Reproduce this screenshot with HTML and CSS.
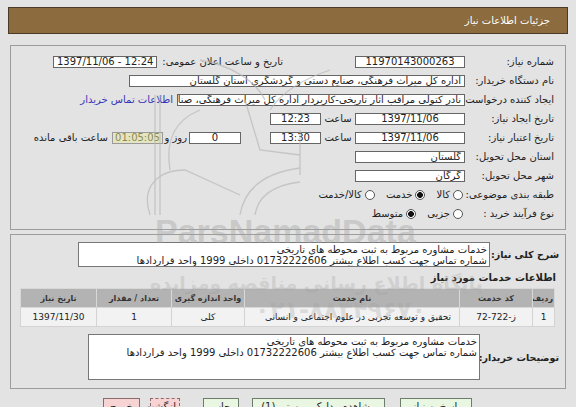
FILE: index.html
```html
<!DOCTYPE html>
<html lang="fa" dir="rtl">
<head>
<meta charset="utf-8">
<title>جزئیات اطلاعات نیاز</title>
<link rel="stylesheet" href="styles.css">
</head>
<body>
<div class="titlebar">جزئیات اطلاعات نیاز</div>

<div class="panel p1">
  <div class="row">
    <div class="lbl">شماره نیاز:</div>
    <div class="inp w110 c">11970143000263</div>
    <div class="lbl2">تاریخ و ساعت اعلان عمومی:</div>
    <div class="inp w104 c ltr">1397/11/06 - 12:24</div>
  </div>
  <div class="row">
    <div class="lbl">نام دستگاه خریدار:</div>
    <div class="inp w336">اداره کل میراث فرهنگی، صنایع دستی و گردشگری استان گلستان</div>
  </div>
  <div class="row">
    <div class="lbl">ایجاد کننده درخواست:</div>
    <div class="inp w288">نادر کتولی مراقب آثار تاریخی-کاربردار اداره کل میراث فرهنگی، صنایع دستی و گردشگری استان گلستان</div>
    <a class="link" href="#">اطلاعات تماس خریدار</a>
  </div>
  <div class="row">
    <div class="lbl">تاریخ ایجاد نیاز:</div>
    <div class="inp w110 c">1397/11/06</div>
    <div class="sa">ساعت</div>
    <div class="inp w51 c">12:23</div>
  </div>
  <div class="row">
    <div class="lbl">تاریخ اعتبار نیاز:</div>
    <div class="inp w110 c">1397/11/06</div>
    <div class="sa">ساعت</div>
    <div class="inp w51 c">13:30</div>
    <div class="inp w52 c ml">0</div>
    <div class="rooz">روز و</div>
    <div class="remain">01:05:05</div>
    <div class="rtxt">ساعت باقی مانده</div>
  </div>
  <div class="row">
    <div class="lbl">استان محل تحویل:</div>
    <div class="inp w110">گلستان</div>
  </div>
  <div class="row">
    <div class="lbl">شهر محل تحویل:</div>
    <div class="inp w110">گرگان</div>
  </div>
  <div class="row">
    <div class="lbl">طبقه بندی موضوعی:</div>
    <div class="opts">
      <span class="opt"><span class="radio"></span>کالا</span>
      <span class="opt"><span class="radio on"></span>خدمت</span>
      <span class="opt"><span class="radio"></span>کالا/خدمت</span>
    </div>
  </div>
  <div class="row">
    <div class="lbl">نوع فرآیند خرید :</div>
    <div class="opts">
      <span class="opt"><span class="radio"></span>جزیی</span>
      <span class="opt"><span class="radio on"></span>متوسط</span>
    </div>
  </div>
</div>

<div class="panel p2">
  <div class="drow">
    <div class="blbl w75">شرح کلی نیاز:</div>
    <div class="tarea t1">خدمات مشاوره مربوط به ثبت محوطه های تاریخی<br>شماره تماس جهت کسب اطلاع بیشتر 01732222606 داخلی 1999 واحد قراردادها</div>
  </div>
  <div class="sect">اطلاعات خدمات مورد نیاز</div>
  <table class="grid">
    <thead>
      <tr>
        <th class="c1">ردیف</th>
        <th class="c2">کد خدمت</th>
        <th class="c3">نام خدمت</th>
        <th class="c4">واحد اندازه گیری</th>
        <th class="c5">تعداد / مقدار</th>
        <th class="c6">تاریخ نیاز</th>
      </tr>
    </thead>
    <tbody>
      <tr>
        <td>1</td>
        <td>ز-722-72</td>
        <td class="name">تحقیق و توسعه تجربی در علوم اجتماعی و انسانی</td>
        <td>کلی</td>
        <td>1</td>
        <td>1397/11/30</td>
      </tr>
    </tbody>
  </table>
  <div class="drow d2">
    <div class="blbl w85">توضیحات خریدار:</div>
    <div class="tarea t2">خدمات مشاوره مربوط به ثبت محوطه های تاریخی<br>شماره تماس جهت کسب اطلاع بیشتر 01732222606 داخلی 1999 واحد قراردادها</div>
  </div>
</div>

<div class="buttons">
  <span class="btn green b1">پاسخ به نیاز</span>
  <span class="btn green b2">مشاهده مدارک پیوستی (1)</span>
  <span class="btn green b3">چاپ</span>
  <span class="btn pink dotted b4">بازگشت</span>
  <span class="btn pink b5">خروج</span>
</div>

<div class="wm" aria-hidden="true">
  <svg class="wm-logo" width="576" height="407" viewBox="0 0 576 407">
    <g fill="none" stroke="#b9b9b9" stroke-width="1.3">
      <path d="M150 215 C140 185 160 170 185 170 L240 195"/>
      <path d="M170 170 C165 140 175 120 200 110"/>
      <path d="M155 95 L155 215"/>
      <path d="M160 95 L160 215"/>
      <path d="M240 215 C245 185 270 172 300 168"/>
      <path d="M255 215 C258 195 275 185 300 182"/>
      <path d="M245 100 L260 150 L300 155"/>
      <path d="M200 60 C230 65 255 80 265 100"/>
      <path d="M330 70 C300 80 280 95 270 110"/>
      <path d="M300 130 L300 175"/>
    </g>
  </svg>
  <div class="wm-en">ParsNamadData</div>
  <div class="wm-fa">پایگاه اطلاع رسانی مناقصه ومزایده</div>
  <div class="wm-ph">۰۲۱-۸۸۳۴۹۶۷۰</div>
</div>
</body>
</html>
```

FILE: styles.css
```css
* { box-sizing: border-box; }
html, body { margin: 0; padding: 0; }
body {
  width: 576px;
  height: 407px;
  overflow: hidden;
  position: relative;
  background: #e3e3e3;
  font-family: "DejaVu Sans", sans-serif;
  font-size: 10px;
  color: #222;
  direction: rtl;
}
.titlebar {
  margin: 7px 8px 0;
  height: 27px;
  background: #8c6b3e;
  border: 1px solid #4a3b28;
  color: #fff;
  line-height: 25px;
  padding-right: 17px;
}
.panel {
  margin: 0 10px;
  border: 1px solid #9c9c9c;
}
.p1 { margin-top: 11px; padding: 6px 0; }
.row { display: flex; align-items: center; height: 19px; }
.lbl { flex: none; width: 100px; padding-right: 11px; white-space: nowrap; }
.inp {
  flex: none;
  height: 12px;
  background: #fff;
  border: 1px solid #666;
  line-height: 10px;
  padding: 0 3px;
  white-space: nowrap;
  overflow: hidden;
}
.c { text-align: center; }
.ltr { direction: ltr; }
.w110 { width: 110px; }
.w104 { width: 104px; }
.w336 { width: 336px; }
.w288 { width: 288px; }
.w51 { width: 51px; }
.w52 { width: 52px; }
.ml { margin-right: 29px; }
.lbl2 { flex: none; width: 126px; margin-right: 72px; white-space: nowrap; }
.link { color: #3535b8; text-decoration: none; margin-right: 4px; white-space: nowrap; }
.sa { flex: none; width: 34px; text-align: center; }
.rooz { flex: none; width: 26px; padding-right: 2px; }
.remain {
  flex: none;
  width: 51px;
  height: 12px;
  line-height: 10px;
  background: #e6e5c2;
  border: 1px solid #999;
  color: #8a8a55;
  text-align: center;
}
.rtxt { margin-right: 4px; white-space: nowrap; }
.opts { display: flex; align-items: center; margin-right: 2px; gap: 11px; }
.opt { display: flex; align-items: center; gap: 3px; white-space: nowrap; }
.radio {
  width: 10px;
  height: 10px;
  border-radius: 50%;
  border: 1px solid #555;
  background: #fff;
  flex: none;
}
.radio.on { background: radial-gradient(circle, #111 0 2.6px, #fff 3.2px); }

.p2 { margin-top: 4px; padding: 7px 0 8px; }
.drow { display: flex; align-items: center; }
.blbl {
  flex: none;
  font-weight: bold;
  font-size: 9.5px;
  padding-right: 6px;
  white-space: nowrap;
  overflow: visible;
}
.w75 { width: 75px; }
.w85 { width: 85px; }
.tarea {
  background: #fff;
  border: 1px solid #777;
  padding: 1px 2px;
  line-height: 11px;
  white-space: nowrap;
  overflow: hidden;
}
.t1 { width: 412px; height: 25px; }
.t2 { width: 392px; height: 46px; }
.sect { height: 21px; line-height: 21px; font-weight: bold; padding-right: 9px; }
.grid {
  width: 534px;
  margin-right: 10px;
  border-collapse: collapse;
  table-layout: fixed;
  font-size: 9px;
}
.grid th {
  height: 19px;
  background: #b3b3b3;
  border: 1px solid #d8d8d8;
  font-weight: bold;
  font-size: 8px;
  color: #333;
  white-space: nowrap;
  overflow: hidden;
  padding: 0 1px;
}
.grid td {
  height: 19px;
  background: #f2f2f2;
  border: 1px solid #d3d3d3;
  text-align: center;
  white-space: nowrap;
}
.grid td.name { text-align: right; padding-right: 8px; }
.c1 { width: 22px; }
.c2 { width: 73px; }
.c3 { width: 215px; }
.c4 { width: 73px; }
.c5 { width: 75px; }
.c6 { width: 76px; }
.d2 { margin-top: 7px; }

.buttons { display: flex; margin-top: 9px; padding-right: 104px; }
.btn {
  flex: none;
  height: 18px;
  line-height: 16px;
  text-align: center;
  border: 1px solid #6c7d6c;
  white-space: nowrap;
  font-size: 10px;
}
.green { background: #e9f7e2; }
.pink { background: #f7d3d3; border-color: #8a6a6a; }
.dotted { border: 1px dashed #8a6a6a; }
.b1 { width: 72px; }
.b2 { width: 133px; margin-right: 15px; }
.b3 { width: 36px; margin-right: 13px; }
.b4 { width: 30px; margin-right: 23px; }
.b5 { width: 37px; margin-right: 10px; }

.wm { position: absolute; inset: 0; pointer-events: none; }
.wm-logo { position: absolute; left: 0; top: 0; opacity: 0.7; }
.wm-en {
  position: absolute;
  left: 155px;
  top: 212px;
  direction: ltr;
  font-family: "Liberation Sans", sans-serif;
  font-weight: bold;
  font-size: 34px;
  color: rgba(160, 160, 160, 0.4);
}
.wm-fa {
  position: absolute;
  left: 150px;
  top: 272px;
  font-size: 19px;
  font-weight: bold;
  color: rgba(160, 160, 160, 0.3);
}
.wm-ph {
  position: absolute;
  left: 255px;
  top: 296px;
  font-size: 24px;
  font-weight: bold;
  color: rgba(160, 160, 160, 0.3);
}
```
